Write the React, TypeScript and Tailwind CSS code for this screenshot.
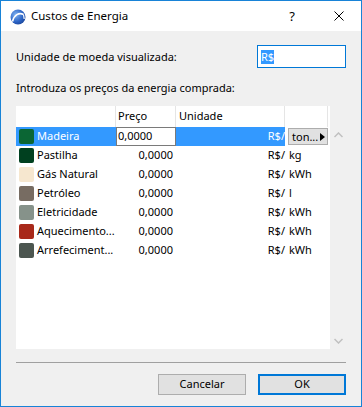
import React from "react";

const rows = [
  { name: "Madeira", color: "#0b6634", unit: "ton...", selected: true },
  { name: "Pastilha", color: "#00401f", unit: "kg" },
  { name: "Gás Natural", color: "#f6e7cf", unit: "kWh" },
  { name: "Petróleo", color: "#776c62", unit: "l" },
  { name: "Eletricidade", color: "#86928a", unit: "kWh" },
  { name: "Aquecimento...", color: "#a8291a", unit: "kWh" },
  { name: "Arrefeciment...", color: "#4c5650", unit: "kWh" },
];

function Logo() {
  return (
    <svg width="16" height="16" viewBox="0 0 16 16">
      <defs>
        <radialGradient id="lg" cx="0.35" cy="0.35" r="0.8">
          <stop offset="0" stopColor="#7fb2f0" />
          <stop offset="0.6" stopColor="#2a62c4" />
          <stop offset="1" stopColor="#1a3f8f" />
        </radialGradient>
      </defs>
      <circle cx="8" cy="8" r="7.5" fill="url(#lg)" />
      <path d="M2.5 12.5 C4 6 9 3 13.5 5.5" stroke="#ffffff" strokeWidth="1.6" fill="none" />
      <path d="M13.5 5.5 L14.2 10" stroke="#ffffff" strokeWidth="1.2" fill="none" />
    </svg>
  );
}

export default function App() {
  return (
    <div
      className="w-[362px] h-[407px] border border-[#1883d7] flex flex-col bg-[#f0f0f0] text-[11px] text-black overflow-hidden"
      style={{ fontFamily: '"Noto Sans", sans-serif' }}
    >
      {/* Title bar */}
      <div className="h-[30px] bg-white flex items-center shrink-0">
        <div className="ml-[9px] mt-[1px] flex items-center">
          <Logo />
        </div>
        <div className="ml-[5px] text-[11.5px] leading-[16px]">Custos de Energia</div>
        <div className="flex-1" />
        <div className="w-[20px] text-center text-[13px] leading-[16px] mr-[32px]">?</div>
        <div className="mr-[17px] flex items-center">
          <svg width="10" height="10" viewBox="0 0 10 10">
            <path d="M0.5 0.5 L9.5 9.5 M9.5 0.5 L0.5 9.5" stroke="#000" strokeWidth="1" />
          </svg>
        </div>
      </div>

      {/* Content */}
      <div className="flex-1 flex flex-col px-[15px]">
        <div className="mt-[14px] flex items-center h-[23px]">
          <div className="flex-1 leading-[16px]">Unidade de moeda visualizada:</div>
          <div className="w-[89px] h-[23px] border border-[#0078d7] bg-white flex items-center pl-[3px]">
            <span className="bg-[#3399ff] text-white leading-[14px] px-[0px]">R$</span>
          </div>
        </div>

        <div className="mt-[12px] leading-[16px]">Introduza os preços da energia comprada:</div>

        <div className="mt-[10px] flex h-[243px]">
          <div className="w-[314px] bg-white flex flex-col">
            {/* header */}
            <div className="flex h-[21px] shrink-0">
              <div className="w-[100px] border-r border-[#e5e5e5]" />
              <div className="w-[60px] border-r border-[#e5e5e5] pl-[2px] flex items-center">Preço</div>
              <div className="w-[109px] border-r border-[#e5e5e5] pl-[3px] flex items-center">Unidade</div>
              <div className="w-[43px] border-r border-[#e5e5e5]" />
            </div>
            {rows.map((r) => (
              <div key={r.name} className="flex h-[19px] shrink-0 items-center">
                <div
                  className={
                    "w-[100px] h-full flex items-center pl-[3px] " +
                    (r.selected ? "bg-[#3399ff] text-white" : "")
                  }
                >
                  <div
                    className="w-[15px] h-[15px] rounded-[2px] shrink-0"
                    style={{ backgroundColor: r.color }}
                  />
                  <span className="ml-[3px] whitespace-nowrap">{r.name}</span>
                </div>
                {r.selected ? (
                  <div className="w-[60px] h-full border border-[#7a7a7a] bg-white flex items-center pl-[1px]">
                    0,0000
                  </div>
                ) : (
                  <div className="w-[60px] h-full flex items-center justify-end pr-[3px]">0,0000</div>
                )}
                <div
                  className={
                    "w-[109px] h-full flex items-center justify-end " +
                    (r.selected ? "bg-[#3399ff] text-white" : "")
                  }
                >
                  R$/
                </div>
                {r.selected ? (
                  <div className="w-[45px] h-full flex items-center pl-[3px]">
                    <div className="w-[40px] h-[17px] bg-[#e1e1e1] border border-[#adadad] flex items-center pl-[3px]">
                      <span className="flex-1 leading-[14px]">ton...</span>
                      <svg width="5" height="8" viewBox="0 0 5 8" className="mr-[2px]">
                        <path d="M0 0 L5 4 L0 8 Z" fill="#000" />
                      </svg>
                    </div>
                  </div>
                ) : (
                  <div className="w-[45px] h-full flex items-center pl-[4px]">{r.unit}</div>
                )}
              </div>
            ))}
          </div>
          {/* scrollbar */}
          <div className="w-[16px] flex flex-col items-center justify-between pt-[26px] pb-[5px]">
            <svg width="9" height="6" viewBox="0 0 9 6">
              <path d="M0.5 5 L4.5 1 L8.5 5" stroke="#c0c0c0" strokeWidth="1.5" fill="none" />
            </svg>
            <svg width="9" height="6" viewBox="0 0 9 6">
              <path d="M0.5 1 L4.5 5 L8.5 1" stroke="#c0c0c0" strokeWidth="1.5" fill="none" />
            </svg>
          </div>
        </div>

        <div className="mt-[13px] h-[1px] bg-[#a0a0a0] mr-[0px]" />

        <div className="mt-[11px] flex justify-end gap-[12px]">
          <div className="w-[88px] h-[21px] bg-[#e1e1e1] border border-[#adadad] flex items-center justify-center">
            Cancelar
          </div>
          <div className="w-[88px] h-[21px] bg-[#e1e1e1] border-2 border-[#0078d7] flex items-center justify-center">
            OK
          </div>
        </div>
      </div>
    </div>
  );
}
